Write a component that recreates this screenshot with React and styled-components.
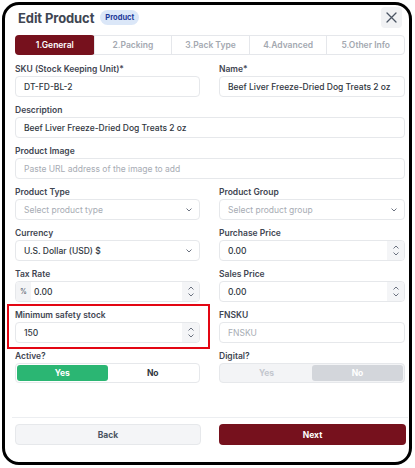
import React, { useState } from 'react';
import styled, { createGlobalStyle } from 'styled-components';

const GlobalStyle = createGlobalStyle`
  html, body {
    margin: 0;
    padding: 0;
    background: #fff;
  }
  body {
    font-family: Inter, "Noto Sans", Arial, sans-serif;
    -webkit-font-smoothing: antialiased;
  }
  * { box-sizing: border-box; }
`;

const MAROON = '#76111d';

// Little chevron used by selects and number spinners
const Chevron = ({ up }) => (
  <svg width="6" height="4" viewBox="0 0 6 4" fill="none">
    <path
      d={up ? 'M0.8 3.2 L3 1 L5.2 3.2' : 'M0.8 0.8 L3 3 L5.2 0.8'}
      stroke="#6b7280"
      strokeWidth="1"
      strokeLinecap="round"
      strokeLinejoin="round"
    />
  </svg>
);

const CloseIcon = () => (
  <svg width="11" height="11" viewBox="0 0 11 11" fill="none">
    <path d="M1 1 L10 10 M10 1 L1 10" stroke="#4b5563" strokeWidth="1.3" strokeLinecap="round" />
  </svg>
);

const tabs = ['1.General', '2.Packing', '3.Pack Type', '4.Advanced', '5.Other Info'];

function Field({ label, children, span, marked }) {
  return (
    <FieldWrap span={span} marked={marked}>
      <Label>{label}</Label>
      {children}
    </FieldWrap>
  );
}

function NumberBox({ value, prefix }) {
  return (
    <InputShell>
      {prefix && <Prefix>{prefix}</Prefix>}
      <Value>{value}</Value>
      <Spinner>
        <Chevron up />
        <Chevron />
      </Spinner>
    </InputShell>
  );
}

function SelectBox({ value, placeholder }) {
  return (
    <InputShell>
      {value ? <Value>{value}</Value> : <Placeholder>{placeholder}</Placeholder>}
      <SelectArrow>
        <Chevron />
      </SelectArrow>
    </InputShell>
  );
}

function Toggle({ value, disabled }) {
  return (
    <ToggleBox disabled={disabled}>
      <Seg on={value === 'yes'} disabled={disabled}>Yes</Seg>
      <Seg on={value === 'no'} disabled={disabled}>No</Seg>
    </ToggleBox>
  );
}

export default function App() {
  const [activeTab] = useState(0);

  return (
    <>
      <GlobalStyle />
      <Frame>
        <Header>
          <TitleRow>
            <Title>Edit Product</Title>
            <Badge>Product</Badge>
          </TitleRow>
          <CloseBtn><CloseIcon /></CloseBtn>
        </Header>

        <Tabs>
          {tabs.map((t, i) => (
            <Tab key={t} active={i === activeTab}>{t}</Tab>
          ))}
        </Tabs>

        <FormGrid>
          <Field label="SKU (Stock Keeping Unit)*">
            <InputShell><Value>DT-FD-BL-2</Value></InputShell>
          </Field>
          <Field label="Name*">
            <InputShell><Value>Beef Liver Freeze-Dried Dog Treats 2 oz</Value></InputShell>
          </Field>

          <Field label="Description" span>
            <InputShell><Value>Beef Liver Freeze-Dried Dog Treats 2 oz</Value></InputShell>
          </Field>

          <Field label="Product Image" span>
            <InputShell><Placeholder>Paste URL address of the image to add</Placeholder></InputShell>
          </Field>

          <Field label="Product Type">
            <SelectBox placeholder="Select product type" />
          </Field>
          <Field label="Product Group">
            <SelectBox placeholder="Select product group" />
          </Field>

          <Field label="Currency">
            <SelectBox value="U.S. Dollar (USD) $" />
          </Field>
          <Field label="Purchase Price">
            <NumberBox value="0.00" />
          </Field>

          <Field label="Tax Rate">
            <NumberBox value="0.00" prefix="%" />
          </Field>
          <Field label="Sales Price">
            <NumberBox value="0.00" />
          </Field>

          <Field label="Minimum safety stock" marked>
            <NumberBox value="150" />
          </Field>
          <Field label="FNSKU">
            <InputShell><Placeholder>FNSKU</Placeholder></InputShell>
          </Field>

          <Field label="Active?">
            <Toggle value="yes" />
          </Field>
          <Field label="Digital?">
            <Toggle value="no" disabled />
          </Field>
        </FormGrid>

        <Footer>
          <BackBtn>Back</BackBtn>
          <NextBtn>Next</NextBtn>
        </Footer>
      </Frame>
    </>
  );
}

const Frame = styled.div`
  margin: 2px 0 0 2px;
  width: 410px;
  height: 463px;
  border: 3px solid #000;
  border-radius: 17px;
  padding: 2px 3px 0 10px;
  display: flex;
  flex-direction: column;
  background: #fff;
  overflow: hidden;
`;

const Header = styled.div`
  display: flex;
  align-items: center;
  justify-content: space-between;
  height: 21px;
  padding-right: 4px;
`;

const TitleRow = styled.div`
  display: flex;
  align-items: center;
  gap: 6px;
  padding-left: 3px;
`;

const Title = styled.h1`
  margin: 0;
  font-size: 13px;
  font-weight: 700;
  color: #3f4652;
  letter-spacing: -0.1px;
`;

const Badge = styled.span`
  background: #dbe7f8;
  color: #1e3a9a;
  font-size: 7.5px;
  font-weight: 700;
  padding: 3px 5px;
  border-radius: 8px;
  line-height: 9px;
`;

const CloseBtn = styled.button`
  width: 21px;
  height: 21px;
  border: none;
  border-radius: 4px;
  background: #f1f2f4;
  display: flex;
  align-items: center;
  justify-content: center;
  padding: 0;
`;

const Tabs = styled.div`
  margin-top: 7px;
  display: grid;
  grid-template-columns: repeat(5, 1fr);
  border: 1px solid #e5e7eb;
  border-radius: 4px;
  height: 20px;
  width: 390px;
`;

const Tab = styled.div`
  display: flex;
  align-items: center;
  justify-content: center;
  font-size: 8.5px;
  font-weight: 600;
  color: ${(p) => (p.active ? '#fff' : '#a3a8b0')};
  background: ${(p) => (p.active ? MAROON : 'transparent')};
  border-radius: ${(p) => (p.active ? '4px' : '0')};
  margin: ${(p) => (p.active ? '-1px' : '0')};
  & + & {
    border-left: 1px solid #e5e7eb;
  }
`;

const FormGrid = styled.div`
  margin-top: 8px;
  width: 390px;
  display: grid;
  grid-template-columns: 185px 186px;
  column-gap: 19px;
  row-gap: 7px;
`;

const FieldWrap = styled.div`
  grid-column: ${(p) => (p.span ? '1 / -1' : 'auto')};
  display: flex;
  flex-direction: column;
  gap: 1px;
  position: relative;

  ${(p) => p.marked && `
    &::after {
      content: '';
      position: absolute;
      left: -8px;
      right: -10px;
      top: -5px;
      bottom: -6px;
      border: 2px solid #e30613;
      pointer-events: none;
    }
  `}
`;

const Label = styled.label`
  font-size: 8.5px;
  line-height: 12px;
  font-weight: 600;
  color: #3f4652;
`;

const InputShell = styled.div`
  height: 21px;
  border: 1px solid #e6e8eb;
  border-radius: 4px;
  display: flex;
  align-items: center;
  overflow: hidden;
  background: #fff;
`;

const Value = styled.span`
  flex: 1;
  padding-left: 8px;
  font-size: 8.5px;
  font-weight: 500;
  color: #2f3640;
  white-space: nowrap;
`;

const Placeholder = styled(Value)`
  font-weight: 400;
  color: #a7acb4;
`;

const Prefix = styled.span`
  width: 15px;
  align-self: stretch;
  background: #f3f4f6;
  display: flex;
  align-items: center;
  justify-content: center;
  font-size: 7px;
  color: #4b5563;
  & + span {
    padding-left: 3px;
  }
`;

const Spinner = styled.div`
  width: 17px;
  align-self: stretch;
  background: #f4f5f7;
  display: flex;
  flex-direction: column;
  align-items: center;
  justify-content: center;
  gap: 3px;
`;

const SelectArrow = styled.div`
  width: 20px;
  display: flex;
  align-items: center;
  justify-content: center;
`;

const ToggleBox = styled.div`
  height: 20px;
  border: 1px solid #e6e8eb;
  border-radius: 4px;
  padding: 1px;
  display: grid;
  grid-template-columns: 1fr 1fr;
  background: ${(p) => (p.disabled ? '#f3f4f6' : '#fff')};
`;

const Seg = styled.div`
  display: flex;
  align-items: center;
  justify-content: center;
  border-radius: 3px;
  font-size: 8.5px;
  font-weight: 700;
  background: ${(p) => (p.on ? (p.disabled ? '#d3d6db' : '#2bb673') : 'transparent')};
  color: ${(p) => (p.on ? '#fff' : p.disabled ? '#c3c7ce' : '#2f3640')};
`;

const Footer = styled.div`
  margin-top: auto;
  margin-left: -3px;
  margin-bottom: 17px;
  width: 396px;
  border-top: 1px solid #eceef1;
  padding: 6px 3px 0 3px;
  display: grid;
  grid-template-columns: 186px 187px;
  column-gap: 18px;
`;

const Button = styled.button`
  height: 21px;
  border-radius: 4px;
  font-family: inherit;
  font-size: 8.5px;
  font-weight: 700;
`;

const BackBtn = styled(Button)`
  background: #f4f5f7;
  border: 1px solid #e6e8eb;
  color: #4b5563;
`;

const NextBtn = styled(Button)`
  background: ${MAROON};
  border: none;
  color: #fff;
`;
